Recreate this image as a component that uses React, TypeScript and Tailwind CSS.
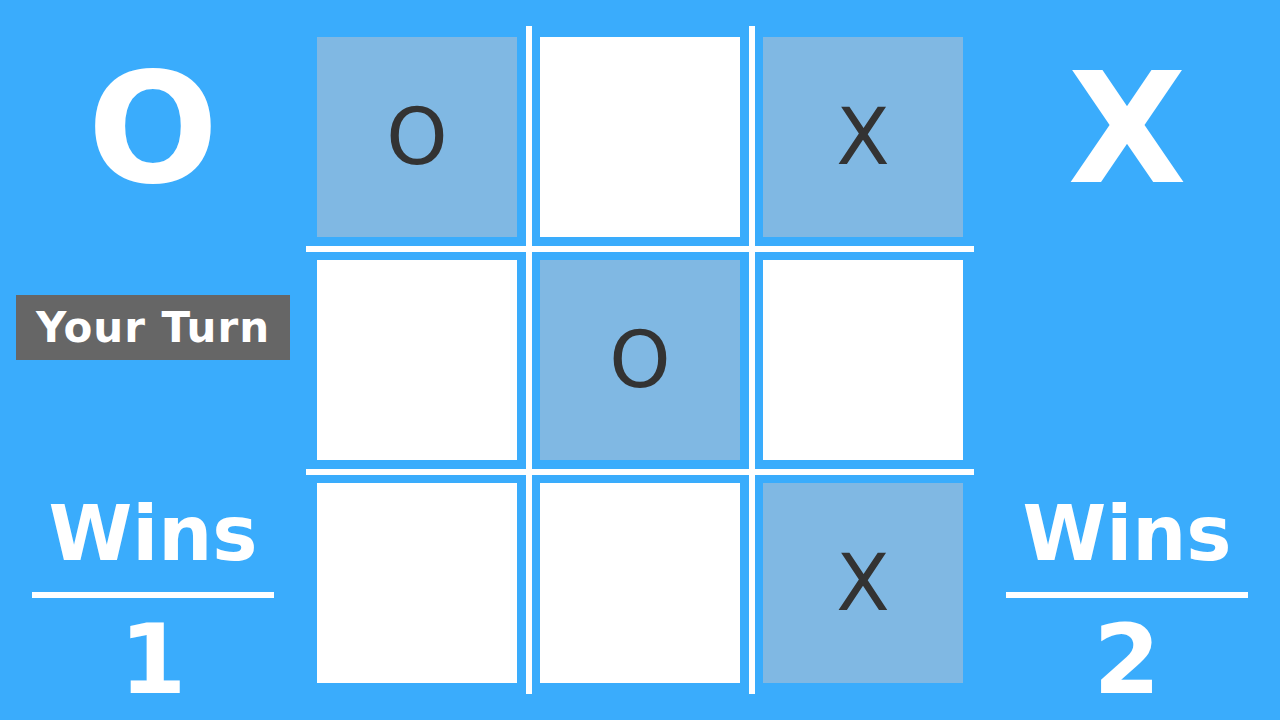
const cells = ['O', '', 'X', '', 'O', '', '', '', 'X'];
const pos = ['col-start-2', 'col-start-4', 'col-start-6'];
const rowPos = ['row-start-2', 'row-start-4', 'row-start-6'];

function Side({ letter, wins, turn }: { letter: string; wins: number; turn?: boolean }) {
  return (
    <div className="flex w-[306px] shrink-0 flex-col items-center text-white">
      <div className="mt-[52px] text-[154px] font-bold leading-[154px]">{letter}</div>
      {turn ? (
        <div className="mt-[89px] flex h-[65px] w-[274px] items-center justify-center bg-[#666666] text-[42px] font-bold leading-none tracking-[1px]">
          Your Turn
        </div>
      ) : (
        <div className="mt-[89px] h-[65px] w-[274px]" />
      )}
      <div className="mt-[136px] text-[76px] font-bold leading-[76px]">Wins</div>
      <div className="mt-[20px] h-[6px] w-[242px] bg-white" />
      <div className="mt-[14px] text-[96px] font-bold leading-[96px]">{wins}</div>
    </div>
  );
}

function Board() {
  return (
    <div className="mt-[26px] grid h-[668px] w-[668px] shrink-0 grid-cols-[11px_200px_23px_200px_23px_200px_11px] grid-rows-[11px_200px_23px_200px_23px_200px_11px]">
      <div className="col-start-3 row-span-full w-[6px] justify-self-center bg-white" />
      <div className="col-start-5 row-span-full w-[6px] justify-self-center bg-white" />
      <div className="row-start-3 col-span-full h-[6px] self-center bg-white" />
      <div className="row-start-5 col-span-full h-[6px] self-center bg-white" />
      {cells.map((c, i) => (
        <div
          key={i}
          className={`${pos[i % 3]} ${rowPos[Math.floor(i / 3)]} flex items-center justify-center text-[78px] leading-none text-[#333333] ${
            c ? 'bg-[#80b8e3]' : 'bg-white'
          }`}
        >
          {c}
        </div>
      ))}
    </div>
  );
}

export default function App() {
  return (
    <div className="flex h-[720px] w-[1280px] overflow-hidden bg-[#3aacfc] font-['DejaVu_Sans',sans-serif]">
      <Side letter="O" wins={1} turn />
      <Board />
      <Side letter="X" wins={2} />
    </div>
  );
}
